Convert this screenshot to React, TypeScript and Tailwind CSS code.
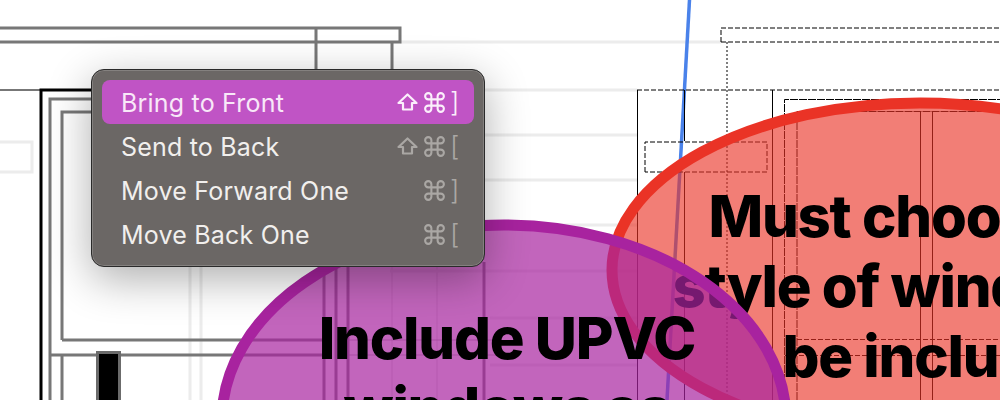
import React from "react";
import { Command } from "lucide-react";

const G = "#777777";
const L = "#ececec";

function Wire() {
  return (
    <svg className="absolute inset-0" width={1000} height={400} fill="none">
      <g stroke={L} strokeWidth={3}>
        <path d="M400 42H721M390 90H637M390 135H637M390 180H637M390 225H637M390 271H637M490 318H637M490 365H637" />
        <path d="M190 260V400M201 260V400" />
        <path d="M392 266V400M437 266V400" strokeWidth={2} />
        <path d="M0 142H32V172H0" />
      </g>
      <g stroke={G} strokeWidth={3}>
        <path d="M0 28H400V42H0M316 28V80M392 42V80" />
        <path d="M0 90H40" strokeWidth={2} />
        <path d="M50 400V99H110M62 340V112H110M62 340H324M50 355H324M62 355V400" />
        <path d="M324 262V400M336 262V400M348 262V400" />
        <path d="M484 262V400" />
        <path d="M336 340H500M336 355H500" strokeWidth={2} opacity={0.3} />
      </g>
      <path d="M41 400V90H110" stroke="#000" strokeWidth={3} />
      <rect x={97.5} y={352.5} width={22} height={60} fill="#000" stroke="#6b6b6b" strokeWidth={3} />
      <path d="M689.5 0L667 400" stroke="#4a82ea" strokeWidth={3.5} />
      <g stroke="#000" strokeWidth={1}>
        <path d="M721 42V28H1000M721 42H1000" strokeDasharray="5 2" />
        <path d="M727 42V400" strokeDasharray="2 2" />
        <path d="M637 90H1000" strokeDasharray="5 2" />
        <path d="M637.5 90V400" />
        <path d="M684.5 90V141M684.5 172V400M772.5 90V400" />
        <path d="M645 172V142H767V172H645" strokeDasharray="5 2" />
        <path d="M784.5 400V99.5H1000" strokeDasharray="8 1" />
        <path d="M797 400V111.5H1000" strokeDasharray="8 1" />
        <path d="M920.5 111V400M932.5 111V400" />
        <path d="M797 339.5H1000M785 355.5H1000" strokeDasharray="5 2" />
      </g>
    </svg>
  );
}

function Shift() {
  return (
    <svg width={21} height={18} viewBox="0 0 21 18" fill="none" stroke="currentColor" strokeWidth={2.2} strokeLinejoin="round" className="mr-[7px]">
      <path d="M10.5 1.5L19.5 10H15V16.5H6V10H1.5Z" />
    </svg>
  );
}

function Row({ label, active, shift, br }: { label: string; active?: boolean; shift?: boolean; br: string }) {
  return (
    <div
      className={
        "flex h-[44px] items-center rounded-[8px] pl-[19px] pr-[17px] " +
        (active ? "bg-[#c054c5] text-[#f8e8f8]" : "text-[#f1efed]")
      }
    >
      <span className="flex-1 pt-[2px] font-[Inter,sans-serif] text-[25px] leading-none tracking-[0.2px]">{label}</span>
      <span className={"flex items-center " + (active ? "text-[#fbeffb]" : "text-[#aaa7a4]")}>
        {shift && <Shift />}
        <Command size={25} strokeWidth={2} className="-mx-[3px]" />
        <span className="ml-[6px] w-[7px] font-[Inter,sans-serif] text-[27px] leading-none font-light">{br}</span>
      </span>
    </div>
  );
}

export default function App() {
  return (
    <div className="relative h-[400px] w-[1000px] overflow-hidden bg-white">
      <Wire />
      <svg className="absolute inset-0" width={1000} height={400} fill="none">
        <ellipse cx={920} cy={270} rx={308} ry={167} fill="#ea3326" fillOpacity={0.63} stroke="#ea3326" strokeWidth={11} />
      </svg>
      <div className="absolute left-[640px] top-[181px] w-[600px] text-center font-[Inter,sans-serif] text-[58px] font-extrabold leading-[70px] tracking-[-1.2px] text-black whitespace-nowrap">
        <div className="pl-[10px]">Must choose one</div>
        <div>style of windows to</div>
        <div className="pl-[6px]">be included</div>
      </div>
      <svg className="absolute inset-0" width={1000} height={400} fill="none">
        <ellipse cx={504} cy={420} rx={282} ry={195} fill="#a8239f" fillOpacity={0.7} stroke="#a8239f" strokeWidth={11} />
      </svg>
      <div className="absolute left-[257px] top-[303px] w-[500px] text-center font-[Inter,sans-serif] text-[58px] font-extrabold leading-[70px] tracking-[-1.2px] text-black whitespace-nowrap">
        <div>Include UPVC</div>
        <div>windows as</div>
      </div>
      <div className="absolute left-[91px] top-[69px] w-[394px] rounded-[13px] border border-[#2a2a2a] bg-[#6b6765] p-[10px] shadow-[inset_0_0_0_1px_#98959390,0_12px_44px_rgba(0,0,0,0.32)]">
        <Row label="Bring to Front" active shift br="]" />
        <Row label="Send to Back" shift br="[" />
        <Row label="Move Forward One" br="]" />
        <Row label="Move Back One" br="[" />
      </div>
    </div>
  );
}
